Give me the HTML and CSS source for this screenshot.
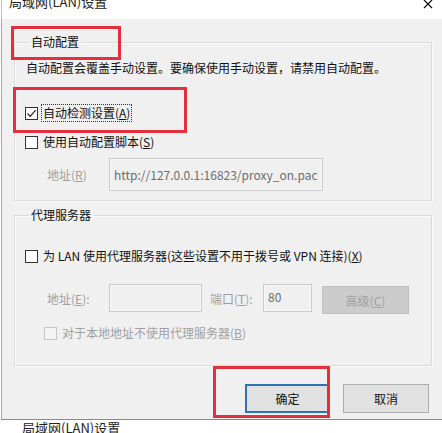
FILE: index.html
```html
<!DOCTYPE html>
<html lang="zh-CN">
<head>
<meta charset="utf-8">
<title>局域网(LAN)设置</title>
<link rel="stylesheet" href="styles.css">
</head>
<body>
<div class="window">
  <div class="titlebar">
    <div class="title">局域网(LAN)设置</div>
    <svg class="close" width="10" height="9" viewBox="0 0 10 9"><path d="M1 0 L9 8 M9 0 L1 8" stroke="#111" stroke-width="1.2" fill="none"/></svg>
  </div>
  <div class="body">
    <fieldset class="group group-auto">
      <legend>自动配置</legend>
      <div class="desc">自动配置会覆盖手动设置。要确保使用手动设置，请禁用自动配置。</div>
      <div class="row row-first">
        <span class="cb checked"><svg width="11" height="11" viewBox="0 0 11 11"><path d="M1.5 5.5 L4.2 8.3 L9.6 2.2" stroke="#222" stroke-width="1.2" fill="none"/></svg></span>
        <span class="label focus">自动检测设置(<u>A</u>)</span>
      </div>
      <div class="row row-second">
        <span class="cb"></span>
        <span class="label">使用自动配置脚本(<u>S</u>)</span>
      </div>
      <div class="addr addr-script">
        <span class="addr-label disabled">地址(<u>R</u>)</span>
        <div class="input input-url">http://127.0.0.1:16823/proxy_on.pac</div>
      </div>
    </fieldset>

    <fieldset class="group group-proxy">
      <legend>代理服务器</legend>
      <div class="row row-lan">
        <span class="cb"></span>
        <span class="label">为 LAN 使用代理服务器(这些设置不用于拨号或 VPN 连接)(<u>X</u>)</span>
      </div>
      <div class="addr addr-proxy">
        <span class="addr-label disabled">地址(<u>E</u>):</span>
        <div class="input input-host"></div>
        <span class="port-label disabled">端口(<u>T</u>):</span>
        <div class="input input-port">80</div>
        <div class="btn btn-adv">高级(<u>C</u>)</div>
      </div>
      <div class="row row-local">
        <span class="cb cb-disabled"></span>
        <span class="label disabled">对于本地地址不使用代理服务器(<u>B</u>)</span>
      </div>
    </fieldset>

    <div class="actions">
      <div class="btn btn-ok">确定</div>
      <div class="btn btn-cancel">取消</div>
    </div>
  </div>
  <div class="under">局域网(LAN)设置</div>
</div>

<div class="mark mark-1"></div>
<div class="mark mark-2"></div>
<div class="mark mark-3"></div>
</body>
</html>
```

FILE: styles.css
```css
html, body {
  margin: 0;
  padding: 0;
}
body {
  width: 442px;
  height: 433px;
  overflow: hidden;
  position: relative;
  background: #fff;
  font-family: "Noto Sans CJK SC", "Noto Sans", sans-serif;
  font-size: 12px;
  color: #111;
}
.window {
  margin-left: 1px;
}
.titlebar {
  height: 19px;
  background: #fff;
  display: flex;
  justify-content: space-between;
  overflow: hidden;
  border-left: 1px solid #c8c8c8;
}
.title {
  font-size: 13px;
  line-height: 16px;
  margin-top: -6px;
  padding-left: 7px;
  color: #222;
}
.close {
  margin: 0 9px 0 0;
}
.body {
  height: 400px;
  box-sizing: border-box;
  background: #f0f0f0;
  border-left: 1px solid #a8a8a8;
  padding: 15px 10px 0 12px;
  display: flex;
  flex-direction: column;
}
.group {
  margin: 0;
  padding: 0 0 0 10px;
  border: 1px solid #dadada;
  box-shadow: inset 1px 1px 0 #fbfbfb, 1px 1px 0 #fbfbfb;
  min-width: 0;
}
.group legend {
  margin-left: 4px;
  padding: 0 2px;
  line-height: 16px;
  color: #111;
}
.group-auto {
  padding-bottom: 9px;
}
.group-proxy {
  margin-top: 6px;
  padding-bottom: 23px;
}
.desc {
  margin-top: 10px;
  padding-left: 1px;
  line-height: 16px;
}
.row {
  display: flex;
  align-items: center;
  line-height: 16px;
}
.row-first {
  margin-top: 28px;
}
.row-second {
  margin-top: 11px;
}
.row-lan {
  margin-top: 24px;
}
.row-local {
  margin-top: 10px;
  padding-left: 19px;
}
.cb {
  width: 11px;
  height: 11px;
  border: 1px solid #333;
  background: #fff;
  flex: none;
  display: flex;
}
.cb-disabled {
  border-color: #c4c4c4;
  background: #f4f4f4;
}
.label {
  margin-left: 3px;
  padding: 0 1px;
  border: 1px solid transparent;
}
.label.focus {
  border: 1px dotted #333;
}
.disabled {
  color: #a0a0a0;
}
u {
  text-decoration: underline;
  text-underline-offset: 1px;
}
.addr {
  display: flex;
  align-items: flex-start;
  padding-left: 22px;
}
.addr-script {
  margin-top: 7px;
}
.addr-proxy {
  margin-top: 19px;
  height: 30px;
}
.addr-label {
  width: 62px;
  flex: none;
  align-self: center;
}
.addr-proxy .addr-label {
  align-self: flex-start;
  margin-top: 6px;
}
.input {
  box-sizing: border-box;
  border: 1px solid #cbcbcb;
  box-shadow: inset 0 0 0 1px #f7f7f7;
  background: #f0f0f0;
  color: #6d6d6d;
  white-space: nowrap;
  overflow: hidden;
}
.input-url {
  width: 214px;
  height: 33px;
  line-height: 31px;
  padding-left: 4px;
}
.input-host {
  width: 93px;
  height: 28px;
}
.port-label {
  margin: 6px 0 0 8px;
  width: 53px;
  flex: none;
}
.input-port {
  width: 49px;
  height: 28px;
  line-height: 24px;
  padding-left: 4px;
}
.btn {
  box-sizing: border-box;
  display: flex;
  align-items: center;
  justify-content: center;
  background: #e1e1e1;
  border: 1px solid #adadad;
  color: #111;
}
.btn-adv {
  margin: 2px 0 0 10px;
  width: 87px;
  height: 28px;
  background: #cccccc;
  border-color: #bfbfbf;
  color: #a0a0a0;
}
.actions {
  margin-top: 18px;
  margin-right: 3px;
  display: flex;
  justify-content: flex-end;
  gap: 13px;
}
.btn-ok {
  width: 85px;
  height: 29px;
  border: 2px solid #2c74b3;
}
.btn-cancel {
  width: 86px;
  height: 29px;
}
.under {
  border-top: 1px solid #8a8a8a;
  padding-left: 21px;
  font-size: 13px;
  line-height: 16px;
  color: #222;
}
.mark {
  position: absolute;
  box-sizing: border-box;
  border: 3px solid #e2303e;
}
.mark-1 {
  left: 11px;
  top: 26px;
  width: 110px;
  height: 34px;
}
.mark-2 {
  left: 13px;
  top: 87px;
  width: 174px;
  height: 46px;
}
.mark-3 {
  left: 213px;
  top: 366px;
  width: 117px;
  height: 52px;
}
```
